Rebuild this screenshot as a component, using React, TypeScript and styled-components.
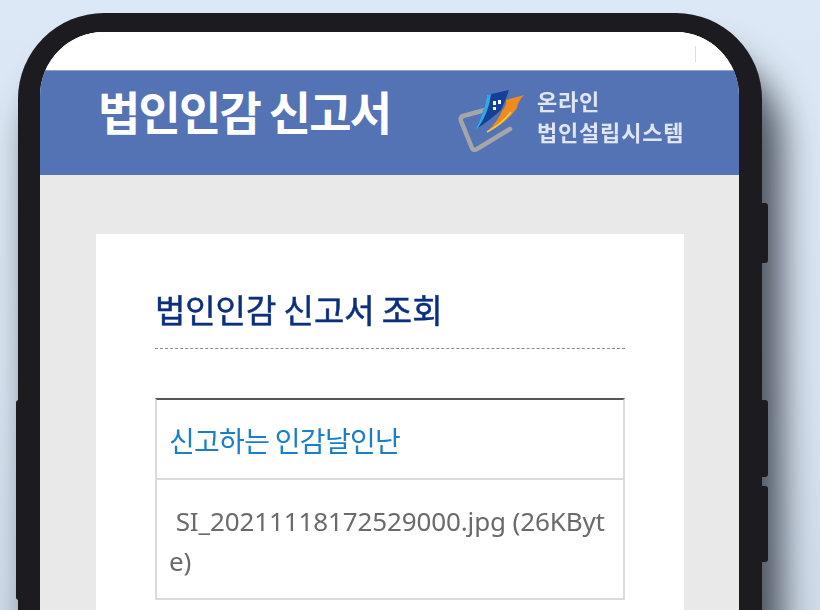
import React from 'react'
import styled, { createGlobalStyle } from 'styled-components'

const GlobalStyle = createGlobalStyle`
  html, body {
    margin: 0;
    padding: 0;
    width: 820px;
    height: 610px;
    overflow: hidden;
    background: #dbe7f4;
  }
  * {
    box-sizing: border-box;
  }
`

const Page = styled.div`
  width: 820px;
  height: 610px;
  overflow: hidden;
  padding: 13px 0 0 18px;
  background: linear-gradient(180deg, #dce8f5 0%, #d8e4f1 60%, #d0dcea 100%);
  font-family: 'Noto Sans CJK KR', 'Noto Sans', sans-serif;
`

const Phone = styled.div`
  position: relative;
  width: 744px;
  height: 900px;
  border-style: solid;
  border-color: #1c1c20;
  border-width: 19px 23px 0 22px;
  border-radius: 86px 86px 0 0;
  background: #fff;
  box-shadow: 16px 44px 34px 4px rgba(40, 46, 58, 0.8);
`

const SideKey = styled.div<{ $side: 'left' | 'right'; $top: number; $height: number }>`
  position: absolute;
  top: ${p => p.$top}px;
  height: ${p => p.$height}px;
  width: 7px;
  background: #1c1c20;
  ${p => (p.$side === 'left' ? 'left: -24px; border-radius: 3px 0 0 3px;' : 'right: -29px; border-radius: 0 3px 3px 0;')}
`

const Screen = styled.div`
  height: 100%;
  overflow: hidden;
  border-radius: 64px 64px 0 0;
  background: #e9e9e9;
  display: flex;
  flex-direction: column;
  filter: blur(0.45px);
`

const TopStrip = styled.div`
  height: 38px;
  flex: none;
  background: #fff;
  display: flex;
  justify-content: flex-end;
  padding-right: 43px;
`

const StripTick = styled.div`
  width: 1px;
  height: 16px;
  margin-top: 14px;
  background: #dcdcdc;
`

const Banner = styled.header`
  flex: none;
  height: 105px;
  display: flex;
  align-items: center;
  padding: 0 0 4px 58px;
  background: #5373b4;
  border-top: 1px solid #8ea2cc;
`

const BannerTitle = styled.h1`
  margin: 0 0 22px;
  width: 360px;
  flex: none;
  font-size: 46px;
  font-weight: 700;
  line-height: 1;
  letter-spacing: -1.8px;
  color: #fff;
  white-space: nowrap;
`

const LogoBox = styled.div`
  display: flex;
  align-items: center;
  gap: 11px;
`

const LogoText = styled.div`
  margin-bottom: 10px;
  font-size: 22px;
  font-weight: 700;
  line-height: 31px;
  letter-spacing: 0.8px;
  color: #dfe5f2;
  white-space: nowrap;
`

const Body = styled.main`
  flex: 1;
  padding: 59px 55px 0 56px;
`

const Card = styled.section`
  height: 600px;
  background: #fff;
  padding: 51px 59px 0 59px;
`

const CardTitle = styled.h2`
  margin: 0;
  height: 64px;
  font-size: 33px;
  font-weight: 400;
  line-height: 48px;
  letter-spacing: -0.05px;
  color: #0b2f7e;
  -webkit-text-stroke: 0.5px #0b2f7e;
  white-space: nowrap;
  border-bottom: 1px dashed #8a8a8a;
`

const InfoTable = styled.div`
  margin-top: 49px;
  border-top: 2px solid #555;
  border-left: 2px solid #dadada;
  border-right: 2px solid #dadada;
`

const Row = styled.div<{ $height: number }>`
  min-height: ${p => p.$height}px;
  padding: 0 12px;
  border-bottom: 2px solid #dcdcdc;
`

const HeadText = styled.div`
  height: 78px;
  font-size: 28px;
  line-height: 81px;
  font-weight: 400;
  letter-spacing: -0.7px;
  color: #1a7fc6;
  white-space: nowrap;
`

const FileText = styled.div`
  padding-top: 21px;
  font-family: 'Noto Sans', 'Noto Sans CJK KR', sans-serif;
  font-size: 26px;
  font-weight: 400;
  line-height: 40px;
  letter-spacing: -0.12px;
  color: #6a6a6a;
  word-break: break-all;
  white-space: pre-wrap;
`

function Logo () {
  return (
    <svg width='68' height='62' viewBox='0 0 68 62'>
      <path d='M27 20 L5 26 Q2 27 3 31 L14 58 Q15 61 19 59 L52 39' fill='none' stroke='#a4a6a8' strokeWidth='4.5' strokeLinecap='round' />
      <path d='M29 5 L51 0 Q47 12 43 20 Q35 28 17 40 Q26 24 29 5 Z' fill='#14409a' />
      <path d='M29 5 L33 4 Q31 22 20 38 L17 40 Q26 24 29 5 Z' fill='#35a8e4' />
      <path d='M44 21 Q49 15 48 10 L66 5 Q60 11 59 18 Q49 33 29 42 Q40 31 44 21 Z' fill='#ef8a1f' />
      <path d='M29 42 Q44 34 53 22' fill='none' stroke='#e8d050' strokeWidth='1.5' />
      <rect x='35' y='11' width='3' height='4' fill='#fff' />
      <rect x='40' y='10' width='3' height='4' fill='#fff' />
      <rect x='35' y='17' width='3' height='3' fill='#fff' />
    </svg>
  )
}

export default function App () {
  return (
    <Page>
      <GlobalStyle />
      <Phone>
        <SideKey $side='right' $top={171} $height={60} />
        <SideKey $side='right' $top={368} $height={77} />
        <SideKey $side='right' $top={454} $height={76} />
        <SideKey $side='left' $top={368} $height={200} />
        <Screen>
          <TopStrip>
            <StripTick />
          </TopStrip>
          <Banner>
            <BannerTitle>법인인감 신고서</BannerTitle>
            <LogoBox>
              <Logo />
              <LogoText>
                온라인
                <br />
                법인설립시스템
              </LogoText>
            </LogoBox>
          </Banner>
          <Body>
            <Card>
              <CardTitle>법인인감 신고서 조회</CardTitle>
              <InfoTable>
                <Row $height={80}>
                  <HeadText>신고하는 인감날인난</HeadText>
                </Row>
                <Row $height={120}>
                  <FileText> SI_20211118172529000.jpg (26KByte)</FileText>
                </Row>
              </InfoTable>
            </Card>
          </Body>
        </Screen>
      </Phone>
    </Page>
  )
}
